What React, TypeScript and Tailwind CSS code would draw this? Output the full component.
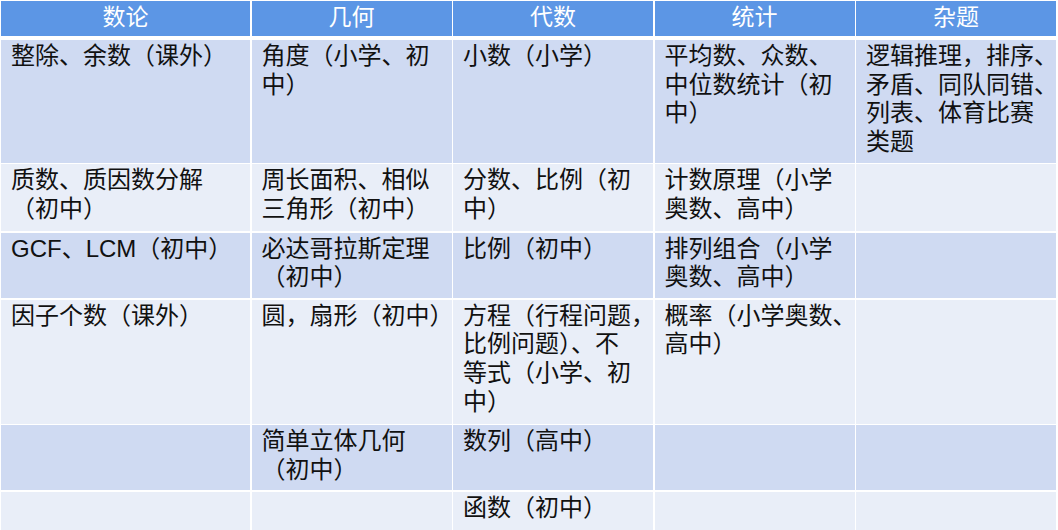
import React from "react";

type Cell = string[];

const headers = ["数论", "几何", "代数", "统计", "杂题"];

const rows: { h: string; cells: Cell[] }[] = [
  {
    h: "h-[122.5px]",
    cells: [
      ["整除、余数（课外）"],
      ["角度（小学、初", "中）"],
      ["小数（小学）"],
      ["平均数、众数、", "中位数统计（初", "中）"],
      ["逻辑推理，排序、", "矛盾、同队同错、", "列表、体育比赛", "类题"],
    ],
  },
  {
    h: "h-[67px]",
    cells: [
      ["质数、质因数分解", "（初中）"],
      ["周长面积、相似", "三角形（初中）"],
      ["分数、比例（初", "中）"],
      ["计数原理（小学", "奥数、高中）"],
      [],
    ],
  },
  {
    h: "h-[65.5px]",
    cells: [
      ["GCF、LCM（初中）"],
      ["必达哥拉斯定理", "（初中）"],
      ["比例（初中）"],
      ["排列组合（小学", "奥数、高中）"],
      [],
    ],
  },
  {
    h: "h-[124px]",
    cells: [
      ["因子个数（课外）"],
      ["圆，扇形（初中）"],
      ["方程（行程问题，", "比例问题）、不", "等式（小学、初", "中）"],
      ["概率（小学奥数、", "高中）"],
      [],
    ],
  },
  {
    h: "h-[65px]",
    cells: [[], ["简单立体几何", "（初中）"], ["数列（高中）"], [], []],
  },
  {
    h: "h-[40px]",
    cells: [[], [], ["函数（初中）"], [], []],
  },
];

const cols = "grid grid-cols-[249px_200px_200px_200px_200px] gap-x-[1.5px]";

export default function App() {
  return (
    <div
      className="w-[1058px] h-[530px] overflow-hidden bg-white p-px"
      style={{ fontFamily: '"Liberation Sans", "Noto Sans CJK SC", sans-serif' }}
    >
      <div className={`${cols} h-[35px]`}>
        {headers.map((t) => (
          <div
            key={t}
            className="bg-[#5c96e5] text-white text-[23px] leading-[33px] text-center"
          >
            {t}
          </div>
        ))}
      </div>
      <div className="mt-[4px] flex flex-col gap-y-[1.5px]">
        {rows.map((r, i) => (
          <div key={i} className={`${cols} ${r.h}`}>
            {r.cells.map((c, j) => (
              <div
                key={j}
                className={`${i % 2 === 0 ? "bg-[#cfdaf2]" : "bg-[#e9eef8]"} pl-[10px] pt-[2px] text-[24px] leading-[28.7px] text-[#111111]`}
              >
                {c.map((line, k) => (
                  <div key={k} className="whitespace-nowrap">
                    {line}
                  </div>
                ))}
              </div>
            ))}
          </div>
        ))}
      </div>
    </div>
  );
}
